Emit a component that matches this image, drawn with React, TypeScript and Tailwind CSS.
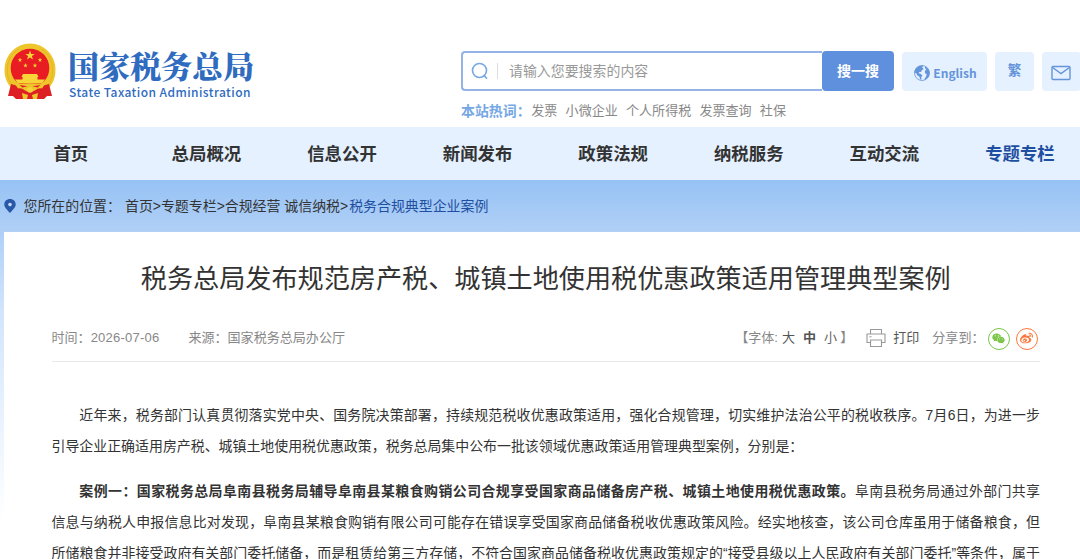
import { FaWeibo, FaWeixin } from "react-icons/fa6";

const navItems = [
  "首页",
  "总局概况",
  "信息公开",
  "新闻发布",
  "政策法规",
  "纳税服务",
  "互动交流",
  "专题专栏",
];

const hotWords = ["发票", "小微企业", "个人所得税", "发票查询", "社保"];

const STAR = "M0,-1 L0.24,-0.31 0.95,-0.31 0.38,0.12 0.59,0.81 0,0.39 -0.59,0.81 -0.38,0.12 -0.95,-0.31 -0.24,-0.31Z";

function Emblem() {
  return (
    <svg viewBox="0 0 52 57" className="h-[57px] w-[52px] shrink-0">
      <path d="M26 0.5 C12 0.5 0.5 12 0.5 27 C0.5 36 4 42 9 47 H43 C48 42 51.5 36 51.5 27 C51.5 12 40 0.5 26 0.5Z" fill="#efc52c" />
      <path d="M8 42 C0 32 2 13 15 6 M44 42 C52 32 50 13 37 6" fill="none" stroke="#dcae26" strokeWidth="0.7" />
      <circle cx="26" cy="25" r="19.3" fill="#e81c22" />
      <g fill="#f8d438">
        <path d={STAR} transform="translate(26 12.5) scale(5)" />
        <path d={STAR} transform="translate(16 17) scale(2.4)" />
        <path d={STAR} transform="translate(36 17) scale(2.4)" />
        <path d={STAR} transform="translate(21.5 22.5) scale(2.4)" />
        <path d={STAR} transform="translate(31 22.5) scale(2.4)" />
        <path d="M19 31 h14 l1.5 3 h-17z M18.5 34 h15 v2.5 h-15z M11 36.5 h30 l-3 4 h-24z" />
      </g>
      <path d="M7 41 L14 43 C20 46 32 46 38 43 L45 41 L48 53 L43 53 L40 56 H12 L9 53 L4 53Z" fill="#dc2024" />
      <path d="M10 39.5 C17 42 21 40.5 26 40.5 C31 40.5 35 42 42 39.5 L38 45.5 C33 44 31 49 26 49 C21 49 19 44 14 45.5Z" fill="#efc52c" />
      <path d="M15.5 42 l8 1.2 -5 1.3z M36.5 42 l-8 1.2 5 1.3z" fill="#dc2024" />
      <path d="M18 50 L24 52 23 56 19 56Z M34 50 L28 52 29 56 33 56Z" fill="#efc52c" />
      <circle cx="26" cy="47" r="2.8" fill="#f6d33c" />
    </svg>
  );
}

function GlobeIcon() {
  return (
    <svg viewBox="0 0 16 16" className="mt-[3px] size-4 shrink-0">
      <circle cx="8" cy="8" r="7.5" fill="none" stroke="#6494da" strokeWidth="0.8" />
      <path d="M9.2 0.6 C4 0.2 0.8 3.6 0.5 7.4 L2.4 8.4 3.6 10.8 5.3 11.6 6.2 14.4 7.5 14.6 7.2 12.2 8.4 10.4 6.6 8.8 4.6 8.2 5.4 6.7 7 6.9 8 5 9.8 4 8.2 2.4Z" fill="#6494da" />
      <path d="M11.2 1.4 L10.8 3 12.3 4.4 10.9 6 11 8.2 12.7 9.2 12.1 11.4 10 14.8 C14.2 14 15.8 10.4 15.4 7.2 C15 4.4 13.6 2.4 11.2 1.4Z" fill="#6494da" />
    </svg>
  );
}

function Header() {
  return (
    <header className="flex h-[127px] items-start">
      <div className="flex w-[461px] shrink-0 items-start pl-1 pt-[43px]">
        <Emblem />
        <div className="ml-3 whitespace-nowrap text-[#2f6bbf]">
          <h1 className="mt-1 h-[38px] font-['Noto_Serif_CJK_SC','Noto_Sans_CJK_SC',serif] text-[31px] font-black leading-[36px]">
            国家税务总局
          </h1>
          <p className="pl-px font-['Noto_Sans_CJK_SC',sans-serif] text-[12px] font-medium leading-[14px] tracking-[0.43px]">
            State Taxation Administration
          </p>
        </div>
      </div>
      <div className="shrink-0 pt-[51px]">
        <div className="flex h-10 items-center">
          <div className="flex h-10 w-[361px] items-center rounded-l-[4px] border-2 border-r-0 border-[#94b4e7] pl-2">
            <svg viewBox="0 0 18 18" className="size-[18px]" fill="none" stroke="#75a7e4" strokeWidth="1.6">
              <circle cx="8.5" cy="8.5" r="7" />
              <path d="M13 13.4 L15.6 16.2" strokeLinecap="round" />
            </svg>
            <i className="ml-2 h-4 w-px bg-[#ddd]" />
            <span className="ml-[11px] text-[13.93px] text-[#999]">请输入您要搜索的内容</span>
          </div>
          <button className="h-10 w-[72px] rounded-[4px] bg-[#5f90de] text-[14px] font-bold text-white">
            搜一搜
          </button>
          <div className="ml-2 flex h-[39px] w-[85px] items-center justify-center gap-[3px] rounded-[4px] bg-[#e5f1ff] pl-0.5 font-['Noto_Sans_CJK_SC',sans-serif] text-[12px] font-bold text-[#6494da]">
            <GlobeIcon />
            <span className="mt-[3px]">English</span>
          </div>
          <div className="ml-2 flex h-[39px] w-[39px] items-center justify-center rounded-[4px] bg-[#e5f1ff] text-[13.5px] font-bold text-[#6494da]">
            繁
          </div>
          <div className="ml-2 flex h-[39px] w-[39px] items-center justify-center rounded-[4px] bg-[#e5f1ff]">
            <svg viewBox="0 0 20 16" className="mr-0.5 mt-1 h-4 w-5" fill="none" stroke="#6494da" strokeWidth="1.4">
              <rect x="1" y="1.5" width="18" height="13" rx="1" />
              <path d="M1.6 2.5 L10 8.6 18.4 2.5" />
            </svg>
          </div>
        </div>
        <div className="mt-2.5 flex h-5 items-center gap-[8.2px] whitespace-nowrap text-[13.06px] text-[#888]">
          <b className="-mr-[7.5px] text-[13.93px] text-[#75a7e4]">本站热词：</b>
          {hotWords.map((word) => (
            <span key={word}>{word}</span>
          ))}
        </div>
      </div>
    </header>
  );
}

function ArticleMeta() {
  return (
    <div className="flex h-[47px] items-center whitespace-nowrap border-b border-[#e8e8e8] text-[13.06px] text-[#888]">
      <span>
        时间：<span className="tracking-[0.2px]">2026-07-06</span>
      </span>
      <span className="ml-[29px]">来源：国家税务总局办公厅</span>
      <div className="ml-auto flex items-center">
        <span>【字体:</span>
        <span className="ml-1 text-[#555]">大</span>
        <b className="ml-2 text-[13.06px] text-[#555]">中</b>
        <span className="ml-2 text-[#666]">小</span>
        <span className="ml-[3px] mr-[13px]">】</span>
        <svg viewBox="0 0 20 20" className="size-5" fill="none" stroke="#999" strokeWidth="1.1">
          <path d="M4.5 6 V1.5 H15.5 V6 M4.5 14.5 H1 V6 H19 V14.5 H15.5 M4.5 12 H15.5 V18.5 H4.5Z M3.5 8.7 H5.5" />
        </svg>
        <span className="ml-[7px] text-[#555]">打印</span>
        <span className="ml-[13px]">分享到：</span>
        <span className="ml-[3px] mt-px flex size-[22px] items-center justify-center rounded-full border border-[#7bc549]">
          <FaWeixin className="size-[13px] text-[#7bc549]" />
        </span>
        <span className="ml-1.5 mr-[2.5px] mt-px flex size-[22px] items-center justify-center rounded-full border border-[#ff763b]">
          <FaWeibo className="size-[13px] text-[#ff763b]" />
        </span>
      </div>
    </div>
  );
}

export default function App() {
  return (
    <div className="h-[559px] w-[1080px] overflow-hidden bg-white font-['Liberation_Sans','Noto_Sans_CJK_SC',sans-serif] text-[#333]">
      <Header />
      <nav className="flex h-[53px] items-center bg-[#e5f1ff] pl-[3px] pt-px text-[17.42px] font-bold">
        {navItems.map((item) => (
          <a
            key={item}
            className={
              item === "专题专栏"
                ? "w-[135.6px] shrink-0 text-center text-[#1f4fa0]"
                : "w-[135.6px] shrink-0 text-center"
            }
          >
            {item}
          </a>
        ))}
      </nav>
      <div className="h-[379px] bg-linear-to-b from-[#96c2f5] via-[#d2e5fc] via-35% to-white to-90%">
        <div className="flex h-[52px] items-center whitespace-nowrap bg-linear-to-b from-[#96c2f5] to-[#b0d0f6] pl-1 text-[13.93px]">
          <svg viewBox="0 0 12 14" className="h-3.5 w-3">
            <path d="M6 0 C2.6 0 0.3 2.4 0.3 5.4 C0.3 8.8 3.5 10.8 6 14 C8.5 10.8 11.7 8.8 11.7 5.4 C11.7 2.4 9.4 0 6 0Z" fill="#2858a8" />
            <circle cx="6" cy="5.6" r="1.8" fill="#c5dcf7" />
          </svg>
          <span className="ml-[7.5px]">您所在的位置：</span>
          <span className="ml-1">首页&gt;专题专栏&gt;合规经营 诚信纳税&gt;</span>
          <span className="ml-px text-[#1f4fa0]">税务合规典型企业案例</span>
        </div>
        <main className="ml-1 h-[327px] bg-white pl-[47.5px] pr-10">
          <h2 className="whitespace-nowrap pt-7 text-center text-[26.13px] leading-[38px]">
            税务总局发布规范房产税、城镇土地使用税优惠政策适用管理典型案例
          </h2>
          <div className="mt-[17px]">
            <ArticleMeta />
          </div>
          <article className="mt-[38px] whitespace-nowrap text-[13.93px] leading-[31px]">
            <p>
              <span className="block pl-[27.86px] [text-align-last:justify]">
                近年来，税务部门认真贯彻落实党中央、国务院决策部署，持续规范税收优惠政策适用，强化合规管理，切实维护法治公平的税收秩序。7月6日，为进一步
              </span>
              <span className="block">
                引导企业正确适用房产税、城镇土地使用税优惠政策，税务总局集中公布一批该领域优惠政策适用管理典型案例，分别是：
              </span>
            </p>
            <p className="mt-3.5">
              <span className="block pl-[27.86px] [text-align-last:justify]">
                <b className="tracking-[0.1px]">案例一：国家税务总局阜南县税务局辅导阜南县某粮食购销公司合规享受国家商品储备房产税、城镇土地使用税优惠政策。</b>
                阜南县税务局通过外部门共享
              </span>
              <span className="block [text-align-last:justify]">
                信息与纳税人申报信息比对发现，阜南县某粮食购销有限公司可能存在错误享受国家商品储备税收优惠政策风险。经实地核查，该公司仓库虽用于储备粮食，但
              </span>
              <span className="block [text-align-last:justify]">
                所储粮食并非接受政府有关部门委托储备，而是租赁给第三方存储，不符合国家商品储备税收优惠政策规定的“接受县级以上人民政府有关部门委托”等条件，属于
              </span>
            </p>
          </article>
        </main>
      </div>
    </div>
  );
}
